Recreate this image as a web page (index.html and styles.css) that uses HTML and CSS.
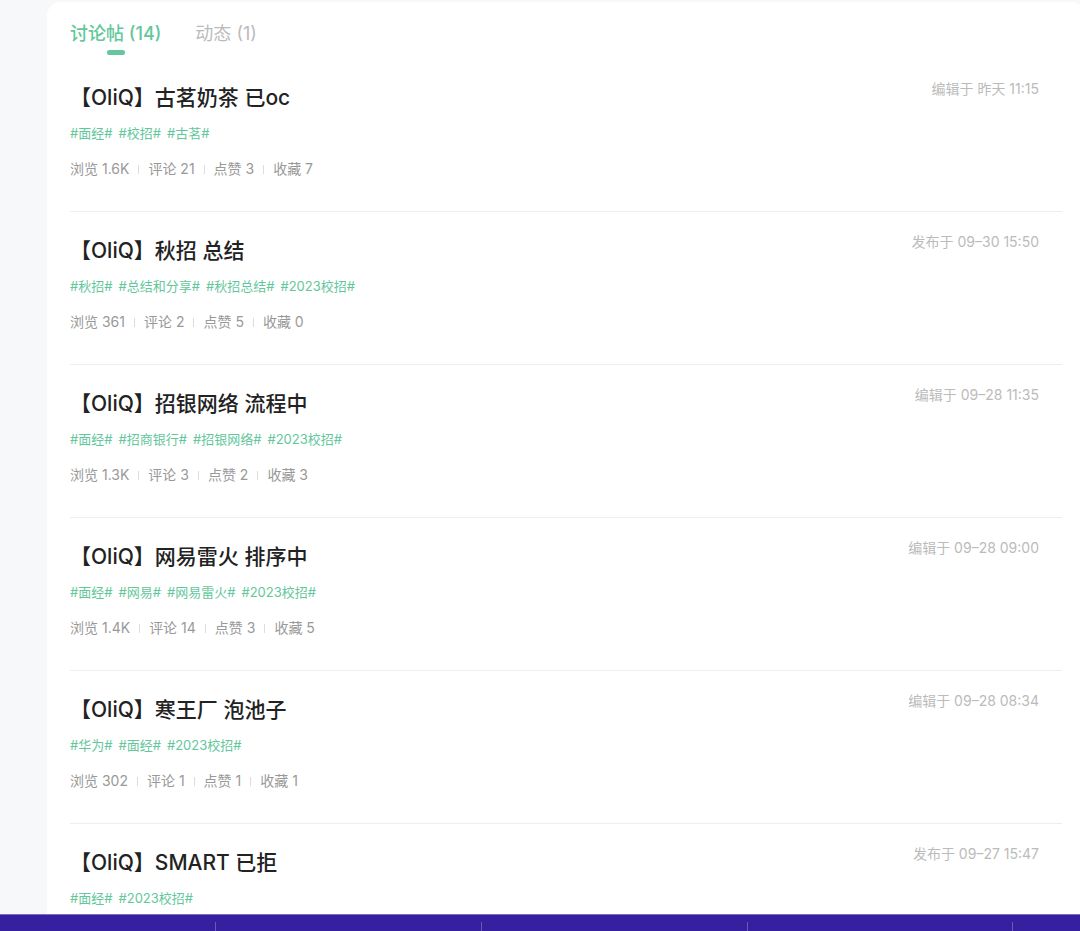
FILE: index.html
```html
<!DOCTYPE html>
<html lang="zh-CN">
<head>
<meta charset="utf-8">
<meta name="viewport" content="width=device-width, initial-scale=1">
<title>讨论帖</title>
<link rel="stylesheet" href="styles.css">
</head>
<body>
<main class="page">
  <section class="card">
    <nav class="tabs">
      <a class="tab tab-active" href="#posts"><span>讨论帖 (14)</span></a>
      <a class="tab" href="#moments"><span>动态 (1)</span></a>
    </nav>
    <ul class="posts" id="posts">
      <li class="post">
        <div class="post-main">
          <h2 class="title">【OliQ】古茗奶茶 已oc</h2>
          <p class="tags"><a href="#t">#面经#</a> <a href="#t">#校招#</a> <a href="#t">#古茗#</a></p>
          <ul class="stats"><li>浏览 1.6K</li><li>评论 21</li><li>点赞 3</li><li>收藏 7</li></ul>
        </div>
        <time class="time">编辑于 昨天 11:15</time>
      </li>
      <li class="post">
        <div class="post-main">
          <h2 class="title">【OliQ】秋招 总结</h2>
          <p class="tags"><a href="#t">#秋招#</a> <a href="#t">#总结和分享#</a> <a href="#t">#秋招总结#</a> <a href="#t">#2023校招#</a></p>
          <ul class="stats"><li>浏览 361</li><li>评论 2</li><li>点赞 5</li><li>收藏 0</li></ul>
        </div>
        <time class="time">发布于 09–30 15:50</time>
      </li>
      <li class="post">
        <div class="post-main">
          <h2 class="title">【OliQ】招银网络 流程中</h2>
          <p class="tags"><a href="#t">#面经#</a> <a href="#t">#招商银行#</a> <a href="#t">#招银网络#</a> <a href="#t">#2023校招#</a></p>
          <ul class="stats"><li>浏览 1.3K</li><li>评论 3</li><li>点赞 2</li><li>收藏 3</li></ul>
        </div>
        <time class="time">编辑于 09–28 11:35</time>
      </li>
      <li class="post">
        <div class="post-main">
          <h2 class="title">【OliQ】网易雷火 排序中</h2>
          <p class="tags"><a href="#t">#面经#</a> <a href="#t">#网易#</a> <a href="#t">#网易雷火#</a> <a href="#t">#2023校招#</a></p>
          <ul class="stats"><li>浏览 1.4K</li><li>评论 14</li><li>点赞 3</li><li>收藏 5</li></ul>
        </div>
        <time class="time">编辑于 09–28 09:00</time>
      </li>
      <li class="post">
        <div class="post-main">
          <h2 class="title">【OliQ】寒王厂 泡池子</h2>
          <p class="tags"><a href="#t">#华为#</a> <a href="#t">#面经#</a> <a href="#t">#2023校招#</a></p>
          <ul class="stats"><li>浏览 302</li><li>评论 1</li><li>点赞 1</li><li>收藏 1</li></ul>
        </div>
        <time class="time">编辑于 09–28 08:34</time>
      </li>
      <li class="post">
        <div class="post-main">
          <h2 class="title">【OliQ】SMART 已拒</h2>
          <p class="tags"><a href="#t">#面经#</a> <a href="#t">#2023校招#</a></p>
        </div>
        <time class="time">发布于 09–27 15:47</time>
      </li>
    </ul>
  </section>
</main>
<footer class="dock">
  <span class="slot"></span><span class="slot"></span><span class="slot"></span><span class="slot"></span><span class="slot"></span>
</footer>
</body>
</html>
```

FILE: styles.css
```css
* {
  box-sizing: border-box;
}

body {
  margin: 0;
  height: 100vh;
  display: flex;
  flex-direction: column;
  overflow: hidden;
  background: #f7f8fa;
  color: #222;
  font-family: Inter, "Noto Sans CJK SC", sans-serif;
  font-size: 14px;
}

a {
  color: inherit;
  text-decoration: none;
}

ul {
  margin: 0;
  padding: 0;
  list-style: none;
}

.page {
  flex: 1;
  min-height: 0;
  overflow: hidden;
  padding: 2px 0 0 47px;
}

.card {
  margin-right: -5px;
  padding: 16px 23px 0;
  border-radius: 14px;
  background: #fff;
}

.tabs {
  display: flex;
  gap: 34px;
  height: 41px;
}

.tab {
  color: #bbb;
  font-size: 18px;
  line-height: 32px;
}

.tab-active {
  color: #63c79b;
  font-weight: 500;
}

.tab-active::after {
  content: "";
  display: block;
  width: 18px;
  height: 5px;
  margin: 0 auto;
  border-radius: 3px;
  background: #63c79b;
}

.post {
  display: flex;
  justify-content: space-between;
  align-items: flex-start;
  height: 153px;
  padding: 20px 23px 0 0;
  border-bottom: 1px solid #eee;
}

.title {
  margin: 0;
  font-size: 21px;
  font-weight: 500;
  line-height: 38px;
}

.tags {
  display: flex;
  gap: 6px;
  margin: 4px 0 0;
  color: #63c79b;
  font-size: 13px;
  line-height: 24px;
}

.stats {
  display: flex;
  margin-top: 12px;
  color: #999;
  line-height: 24px;
}

.stats li {
  display: flex;
  align-items: center;
}

.stats li + li::before {
  content: "";
  width: 1px;
  height: 9px;
  margin: 0 9px;
  background: #ddd;
}

.time {
  color: #bbb;
  line-height: 20px;
}

.dock {
  display: grid;
  grid-template-columns: 216fr 266fr 266fr 265fr 67fr;
  height: 17px;
  padding-top: 7px;
  border-top: 1px solid #7a6cc0;
  background: #3720a0;
}

.slot {
  border-right: 1px solid #6a58b9;
}

.slot:last-child {
  border-right: 0;
}
```
